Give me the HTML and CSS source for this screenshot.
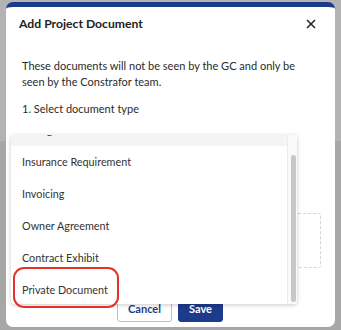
FILE: index.html
```html
<!DOCTYPE html>
<html>
<head>
<meta charset="utf-8">
<link rel="stylesheet" href="styles.css">
</head>
<body>
<div class="modal">
  <div class="header">
    <h1 class="title">Add Project Document</h1>
    <svg class="close" width="10" height="10" viewBox="0 0 10 10"><path d="M1 1L9 9M9 1L1 9" stroke="#222" stroke-width="1.5" fill="none"/></svg>
  </div>
  <div class="content">
    <p class="note">These documents will not be seen by the GC and only be seen by the Constrafor team.</p>
    <p class="step">1. Select document type</p>
    <div class="upload"></div>
  </div>
  <div class="footer">
    <button class="btn btn-cancel">Cancel</button>
    <button class="btn btn-save">Save</button>
  </div>
  <div class="menu">
    <div class="menu-list">
      <div class="item item-hover">Change Order</div>
      <div class="item">Insurance Requirement</div>
      <div class="item">Invoicing</div>
      <div class="item">Owner Agreement</div>
      <div class="item">Contract Exhibit</div>
      <div class="item">Private Document</div>
    </div>
    <div class="scroll"><div class="thumb"></div></div>
  </div>
  <div class="highlight"></div>
</div>
</body>
</html>
```
FILE: styles.css
```css
* { box-sizing: border-box; }
html, body { margin: 0; padding: 0; }
body {
  width: 341px;
  height: 330px;
  overflow: hidden;
  background: linear-gradient(#b3b3b3 0, #b3b3b3 141px, #a7a7a7 141px);
  font-family: Lato, "Open Sans", sans-serif;
  padding-top: 2px;
}
.modal {
  position: relative;
  margin-left: 6px;
  width: 329px;
  height: 325px;
  background: #fff;
  border-top: 5px solid #1d3b8b;
  border-radius: 7px;
  display: flex;
  flex-direction: column;
}
.header {
  display: flex;
  align-items: center;
  justify-content: space-between;
  padding: 8px 19px 0 13px;
  height: 25px;
}
.title {
  margin: 0;
  font-size: 12.2px;
  font-weight: 700;
  color: #222;
}
.close { display: block; margin-top: 1px; }
.content {
  padding: 26px 14px 0 16px;
  flex: 1;
}
.note {
  margin: 0;
  max-width: 280px;
  font-size: 11px;
  line-height: 16px;
  color: #2b2b2b;
}
.step {
  margin: 11px 0 0;
  font-size: 11px;
  line-height: 16px;
  color: #2b2b2b;
}
.upload {
  margin-top: 96px;
  height: 55px;
  border: 1px dashed #d4d4d4;
  border-radius: 2px;
}
.footer {
  display: flex;
  justify-content: center;
  gap: 6px;
  height: 32px;
  margin-left: -1px;
}
.btn {
  font-family: Lato, sans-serif;
  font-weight: 700;
  font-size: 11px;
  height: 27px;
  border-radius: 3px;
  padding: 0;
}
.btn-cancel {
  width: 55px;
  background: #fff;
  color: #1d3b8b;
  border: 1px solid #b9c0cc;
}
.btn-save {
  width: 45px;
  background: #1d3b8b;
  color: #fff;
  border: 1px solid #1d3b8b;
}
.menu {
  position: absolute;
  left: 5px;
  top: 128px;
  width: 286px;
  height: 169px;
  background: #fff;
  border-radius: 3px;
  box-shadow: 0 1px 4px rgba(0,0,0,0.22);
  overflow: hidden;
  display: flex;
}
.menu-list {
  flex: 1;
  margin-top: -21.5px;
}
.item {
  height: 32px;
  line-height: 32px;
  padding-left: 11px;
  font-size: 10.8px;
  color: #333;
  white-space: nowrap;
}
.item-hover { background: #f4f4f4; }
.scroll {
  width: 10px;
  border-left: 1px solid #ececec;
  background: #fafafa;
  position: relative;
}
.thumb {
  position: absolute;
  left: 3px;
  top: 20px;
  width: 5px;
  height: 147px;
  background: #c7c7c7;
  border-radius: 3px;
}
.highlight {
  position: absolute;
  left: 7px;
  top: 260px;
  width: 106px;
  height: 41px;
  border: 2px solid #e5332a;
  border-radius: 11px;
}
```
